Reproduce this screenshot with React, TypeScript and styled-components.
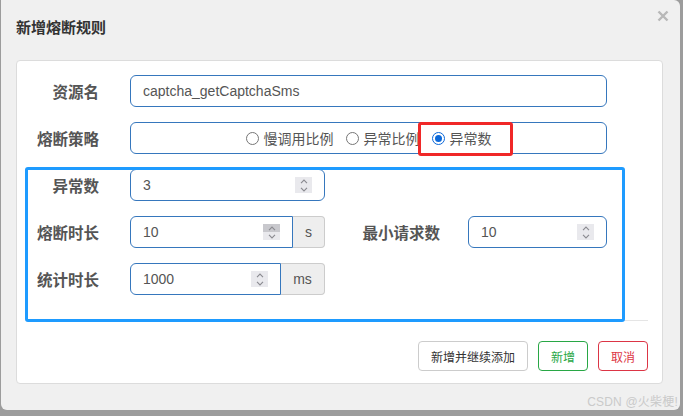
import React from "react";
import styled, { createGlobalStyle } from "styled-components";

const GlobalStyle = createGlobalStyle`
	html, body {
		margin: 0;
		padding: 0;
		background: #9c9c9c;
		font-family: "Liberation Sans", "Noto Sans CJK SC", sans-serif;
	}
`;

const Page = styled.div`
	width: 683px;
	height: 416px;
	overflow: hidden;
`;

const Modal = styled.div`
	position: relative;
	box-sizing: border-box;
	margin-left: 1px;
	width: 679px;
	height: 410px;
	background: #f0f0f0;
	border-radius: 0 6px 6px 6px;
`;

const Header = styled.div`
	box-sizing: border-box;
	height: 60px;
	display: flex;
	justify-content: space-between;
	align-items: flex-start;
	padding: 10px 11px 0 15px;
`;

const Title = styled.div`
	margin-top: 11px;
	font-size: 15px;
	line-height: 14px;
	font-weight: bold;
	color: #333;
`;

const Close = styled.div`
	width: 12px;
	height: 12px;
	display: flex;
`;

const Panel = styled.div`
	box-sizing: border-box;
	margin: 0 17px 0 15px;
	height: 324px;
	background: #fff;
	border: 1px solid #dcdcdc;
	border-radius: 4px;
	padding-top: 14px;
`;

const Form = styled.div`
	display: flex;
	flex-direction: column;
	gap: 15px;
	padding-bottom: 25px;
`;

const Row = styled.div`
	display: flex;
	align-items: center;
	height: 32px;
`;

const Label = styled.div<{ $width?: number; $gap?: number }>`
	flex-shrink: 0;
	width: ${(p) => p.$width ?? 82}px;
	margin-right: ${(p) => p.$gap ?? 31}px;
	text-align: right;
	font-size: 15.5px;
	font-weight: bold;
	color: #555;
`;

const Field = styled.div<{ $width: number; $addon?: boolean }>`
	box-sizing: border-box;
	width: ${(p) => p.$width}px;
	height: 32px;
	display: flex;
	align-items: center;
	padding: 0 12px;
	border: 1px solid #3677bd;
	border-radius: ${(p) => (p.$addon ? "6px 0 0 6px" : "6px")};
	font-size: 14px;
	color: #555;
`;

const Value = styled.span`
	flex: 1;
`;

const RadioGroup = styled(Field)`
	justify-content: center;
	gap: 12px;
`;

const RadioItem = styled.label`
	display: flex;
	align-items: center;
	gap: 5px;
	font-size: 14px;
	color: #555;
`;

const Circle = styled.span<{ $checked?: boolean }>`
	box-sizing: border-box;
	width: 13px;
	height: 13px;
	border-radius: 50%;
	border: 1px solid ${(p) => (p.$checked ? "#0b68d9" : "#767676")};
	background: #fff;
	display: flex;
	align-items: center;
	justify-content: center;
	&::after {
		content: "";
		display: ${(p) => (p.$checked ? "block" : "none")};
		width: 7px;
		height: 7px;
		border-radius: 50%;
		background: #0b68d9;
	}
`;

const Spinner = styled.div`
	width: 17px;
	height: 16px;
	display: flex;
	flex-direction: column;
	background: #e9e9ed;
`;

const SpinHalf = styled.div<{ $hover?: boolean }>`
	flex: 1;
	display: flex;
	align-items: center;
	justify-content: center;
	background: ${(p) => (p.$hover ? "#c8c8cd" : "transparent")};
`;

const Addon = styled.div<{ $width: number }>`
	box-sizing: border-box;
	width: ${(p) => p.$width}px;
	height: 32px;
	display: flex;
	align-items: center;
	justify-content: center;
	background: #eee;
	border: 1px solid #ccc;
	border-left: none;
	border-radius: 0 4px 4px 0;
	font-size: 14px;
	color: #555;
`;

const Group = styled.div`
	display: flex;
`;

const Footer = styled.div`
	margin: 0 14px;
	border-top: 1px solid #e5e5e5;
	padding-top: 20px;
	display: flex;
	justify-content: flex-end;
	gap: 10px;
`;

const Button = styled.button<{ $tone?: "success" | "danger" }>`
	box-sizing: border-box;
	height: 30px;
	padding: 0 12px;
	background: #fff;
	border-radius: 4px;
	font-family: inherit;
	font-size: 12px;
	border: 1px solid
		${(p) => (p.$tone === "success" ? "#28a745" : p.$tone === "danger" ? "#dc3545" : "#ccc")};
	color: ${(p) => (p.$tone === "success" ? "#28a745" : p.$tone === "danger" ? "#dc3545" : "#333")};
`;

const Highlight = styled.div<{ $color: string; $w: number }>`
	position: absolute;
	box-sizing: border-box;
	border: ${(p) => p.$w}px solid ${(p) => p.$color};
	border-radius: 3px;
	pointer-events: none;
`;

const BlueBox = styled(Highlight)`
	left: 24px;
	top: 167px;
	width: 600px;
	height: 155px;
`;

const RedBox = styled(Highlight)`
	left: 417px;
	top: 122px;
	width: 95px;
	height: 34px;
`;

const Watermark = styled.div`
	position: absolute;
	right: 2px;
	bottom: 1px;
	font-size: 12px;
	color: #cacaca;
	letter-spacing: 0.2px;
`;

const Chevron = ({ up }: { up?: boolean }) => (
	<svg width="8" height="5" viewBox="0 0 8 5">
		<polyline
			points={up ? "1,4.2 4,1 7,4.2" : "1,0.8 4,4 7,0.8"}
			fill="none"
			stroke="#8a8a90"
			strokeWidth="1.1"
		/>
	</svg>
);

const Spin = ({ hover }: { hover?: boolean }) => (
	<Spinner>
		<SpinHalf $hover={hover}>
			<Chevron up />
		</SpinHalf>
		<SpinHalf>
			<Chevron />
		</SpinHalf>
	</Spinner>
);

const NumberField = ({
	value,
	width,
	addon,
	hover,
}: {
	value: string;
	width: number;
	addon?: boolean;
	hover?: boolean;
}) => (
	<Field $width={width} $addon={addon}>
		<Value>{value}</Value>
		<Spin hover={hover} />
	</Field>
);

const strategies = ["慢调用比例", "异常比例", "异常数"];

export default function App() {
	return (
		<Page>
			<GlobalStyle />
			<Modal>
				<Header>
					<Title>新增熔断规则</Title>
					<Close>
						<svg width="12" height="12" viewBox="0 0 12 12">
							<path d="M1.5 1.5 L10.5 10.5 M10.5 1.5 L1.5 10.5" stroke="#b8b8b8" strokeWidth="2.4" />
						</svg>
					</Close>
				</Header>
				<Panel>
					<Form>
						<Row>
							<Label>资源名</Label>
							<Field $width={477}>
								<Value>captcha_getCaptchaSms</Value>
							</Field>
						</Row>
						<Row>
							<Label>熔断策略</Label>
							<RadioGroup $width={477}>
								{strategies.map((s, i) => (
									<RadioItem key={s}>
										<Circle $checked={i === 2} />
										{s}
									</RadioItem>
								))}
							</RadioGroup>
						</Row>
						<Row>
							<Label>异常数</Label>
							<NumberField value="3" width={195} />
						</Row>
						<Row>
							<Label>熔断时长</Label>
							<Group>
								<NumberField value="10" width={163} addon hover />
								<Addon $width={32}>s</Addon>
							</Group>
							<Label $width={115} $gap={28}>
								最小请求数
							</Label>
							<NumberField value="10" width={139} />
						</Row>
						<Row>
							<Label>统计时长</Label>
							<Group>
								<NumberField value="1000" width={151} addon />
								<Addon $width={44}>ms</Addon>
							</Group>
						</Row>
					</Form>
					<Footer>
						<Button>新增并继续添加</Button>
						<Button $tone="success">新增</Button>
						<Button $tone="danger">取消</Button>
					</Footer>
				</Panel>
				<BlueBox $color="#1e9bff" $w={3} />
				<RedBox $color="#f02828" $w={3} />
				<Watermark>CSDN @火柴梗!</Watermark>
			</Modal>
		</Page>
	);
}
